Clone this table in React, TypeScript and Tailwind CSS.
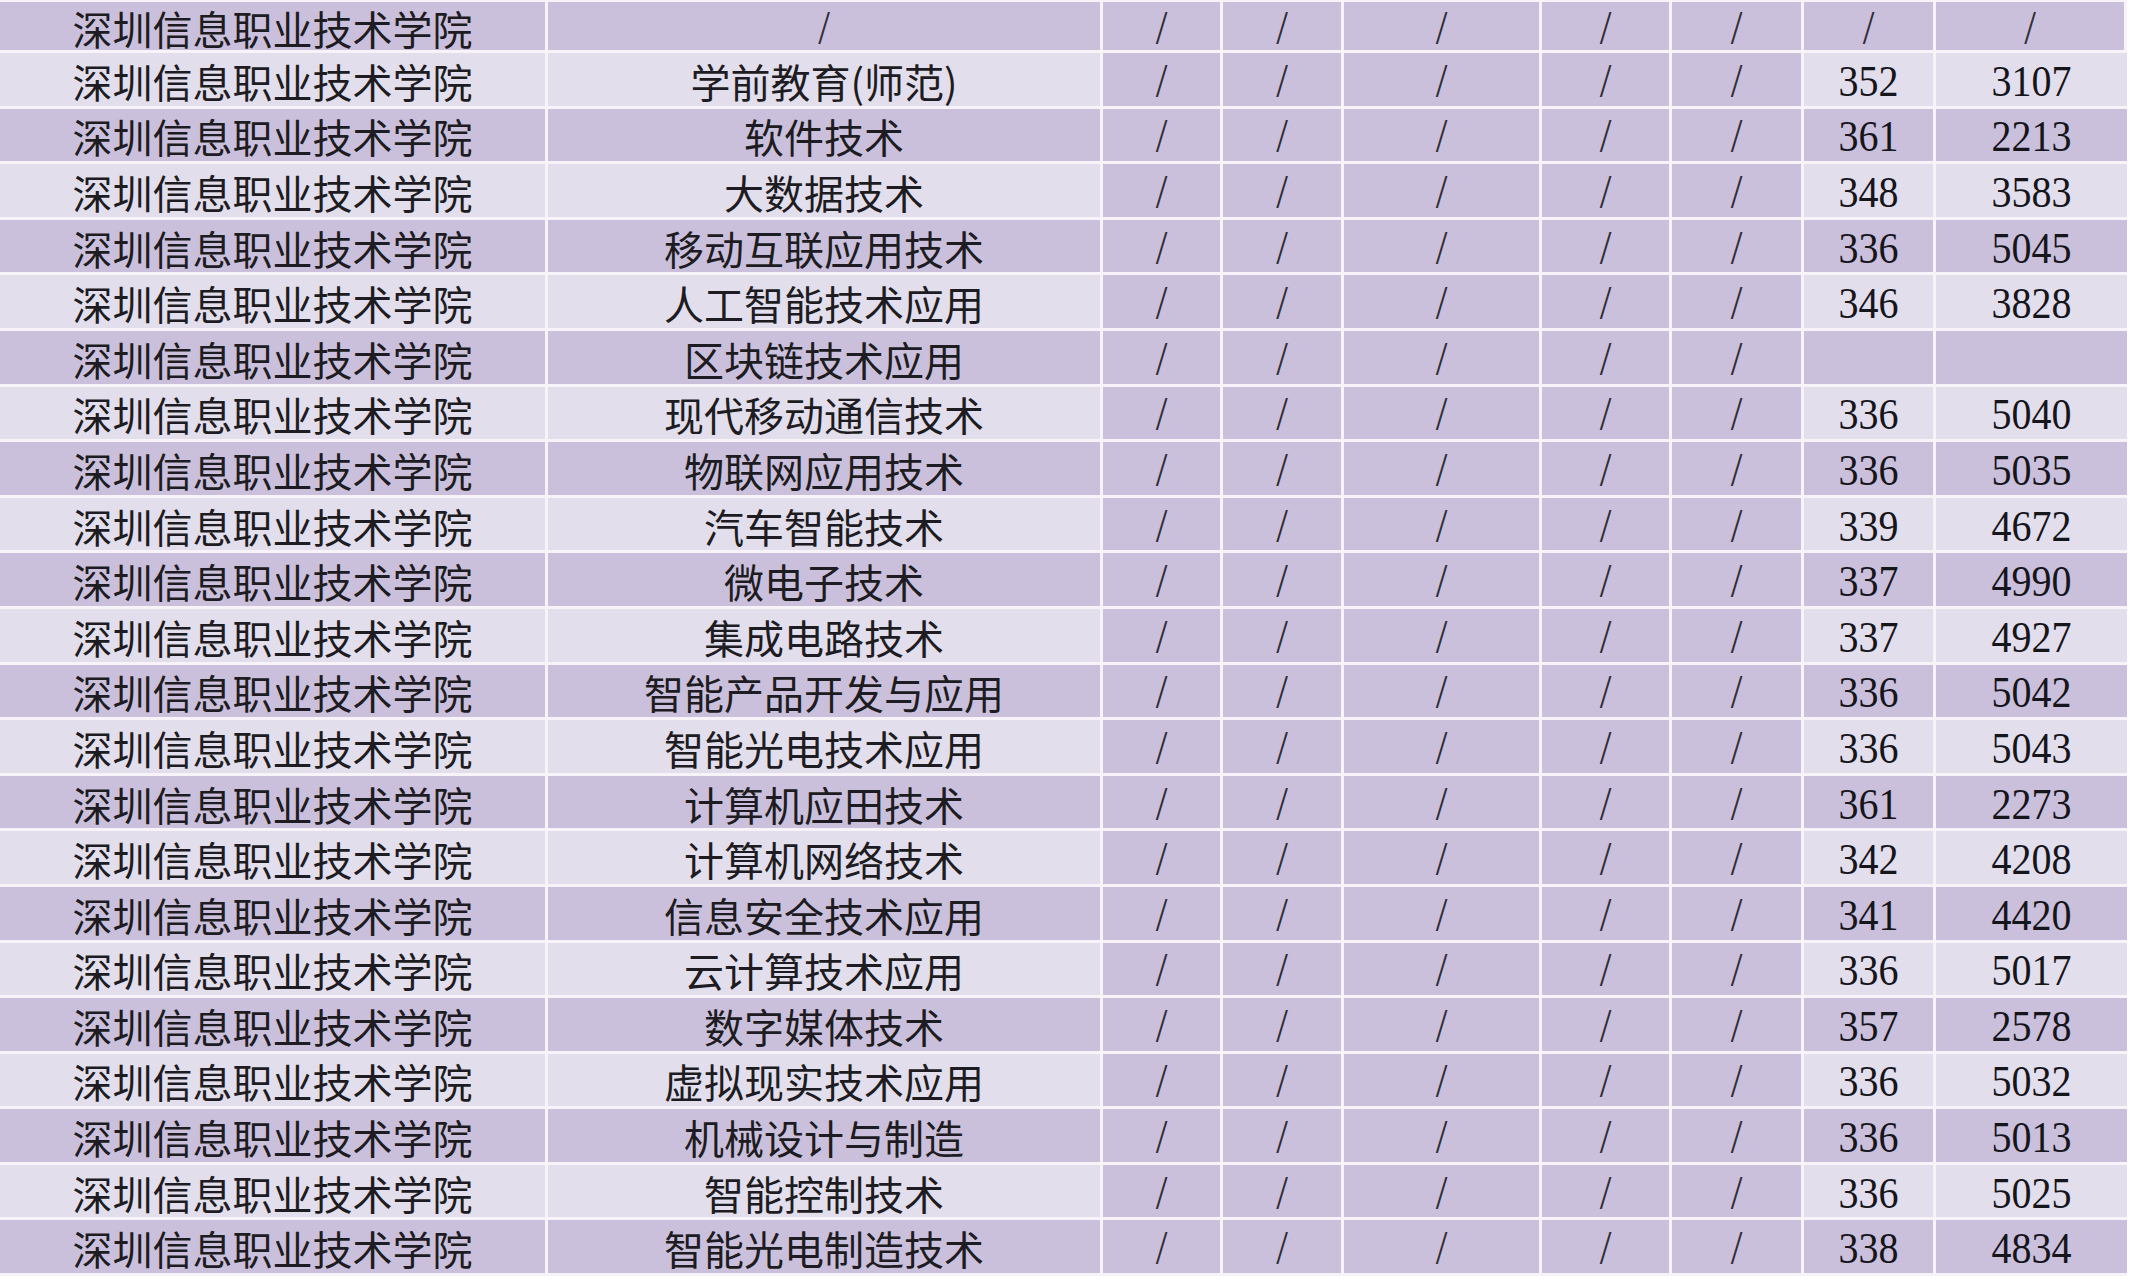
const school = "深圳信息职业技术学院";

type Row = { major: string; score: string; rank: string };

const rows: Row[] = [
  { major: "/", score: "/", rank: "/" },
  { major: "学前教育(师范)", score: "352", rank: "3107" },
  { major: "软件技术", score: "361", rank: "2213" },
  { major: "大数据技术", score: "348", rank: "3583" },
  { major: "移动互联应用技术", score: "336", rank: "5045" },
  { major: "人工智能技术应用", score: "346", rank: "3828" },
  { major: "区块链技术应用", score: "", rank: "" },
  { major: "现代移动通信技术", score: "336", rank: "5040" },
  { major: "物联网应用技术", score: "336", rank: "5035" },
  { major: "汽车智能技术", score: "339", rank: "4672" },
  { major: "微电子技术", score: "337", rank: "4990" },
  { major: "集成电路技术", score: "337", rank: "4927" },
  { major: "智能产品开发与应用", score: "336", rank: "5042" },
  { major: "智能光电技术应用", score: "336", rank: "5043" },
  { major: "计算机应田技术", score: "361", rank: "2273" },
  { major: "计算机网络技术", score: "342", rank: "4208" },
  { major: "信息安全技术应用", score: "341", rank: "4420" },
  { major: "云计算技术应用", score: "336", rank: "5017" },
  { major: "数字媒体技术", score: "357", rank: "2578" },
  { major: "虚拟现实技术应用", score: "336", rank: "5032" },
  { major: "机械设计与制造", score: "336", rank: "5013" },
  { major: "智能控制技术", score: "336", rank: "5025" },
  { major: "智能光电制造技术", score: "338", rank: "4834" },
];

const dark = "bg-[#cbc0dc]";
const light = "bg-[#e2deec]";
const line = "border-[#f7f3f9]";

function SlashGlyph() {
  return (
    <span className="font-['Liberation_Serif',serif] text-[42px] leading-none font-light text-[#2e2e38] inline-block scale-y-[1.15]">
      /
    </span>
  );
}

function Slash({ className }: { className: string }) {
  return (
    <div className={["flex items-center justify-center pt-[3px] border-r-[3px]", line, dark, className].join(" ")}>
      <SlashGlyph />
    </div>
  );
}

function TableRow({ row, idx }: { row: Row; idx: number }) {
  const bg = idx % 2 === 0 ? dark : light;
  const h = idx === 0 ? "h-[51px]" : "h-[55.6px]";
  const cjk = "font-['Noto_Sans_CJK_SC',sans-serif] text-[40px] text-[#1c1c22] leading-none";
  const num = "font-['Liberation_Serif',serif] text-[40px] text-[#15151c] leading-none";
  const slashNum = row.score === "/";
  return (
    <div className={["flex border-b-[3px]", line, h].join(" ")}>
      <div className={["w-[548px] flex items-center justify-center pt-[3px] border-r-[3px]", line, bg, cjk].join(" ")}>
        {school}
      </div>
      <div className={["w-[555px] flex items-center justify-center pt-[3px] border-r-[3px]", line, bg, cjk].join(" ")}>
        {row.major === "/" ? <SlashGlyph /> : <span>{row.major}</span>}
      </div>
      <Slash className="w-[120px]" />
      <Slash className="w-[121px]" />
      <Slash className="w-[198px]" />
      <Slash className="w-[130px]" />
      <Slash className="w-[132px]" />
      {slashNum ? (
        <>
          <Slash className="w-[132px]" />
          <Slash className="w-[191px] border-r-0" />
        </>
      ) : (
        <>
          <div className={["w-[132px] flex items-center justify-center pt-[3px] border-r-[3px]", line, bg, num].join(" ")}>
            <span className="inline-block scale-y-[1.12]">{row.score}</span>
          </div>
          <div className={["w-[191px] flex items-center justify-center pt-[3px]", bg, num].join(" ")}>
            <span className="inline-block scale-y-[1.12]">{row.rank}</span>
          </div>
        </>
      )}
    </div>
  );
}

export default function App() {
  return (
    <div className="w-[2134px] h-[1280px] bg-white overflow-hidden">
      <div className="w-[2127px] pt-[2px] bg-[#f7f3f9]">
        {rows.map((r, i) => (
          <TableRow key={i} row={r} idx={i} />
        ))}
      </div>
    </div>
  );
}
